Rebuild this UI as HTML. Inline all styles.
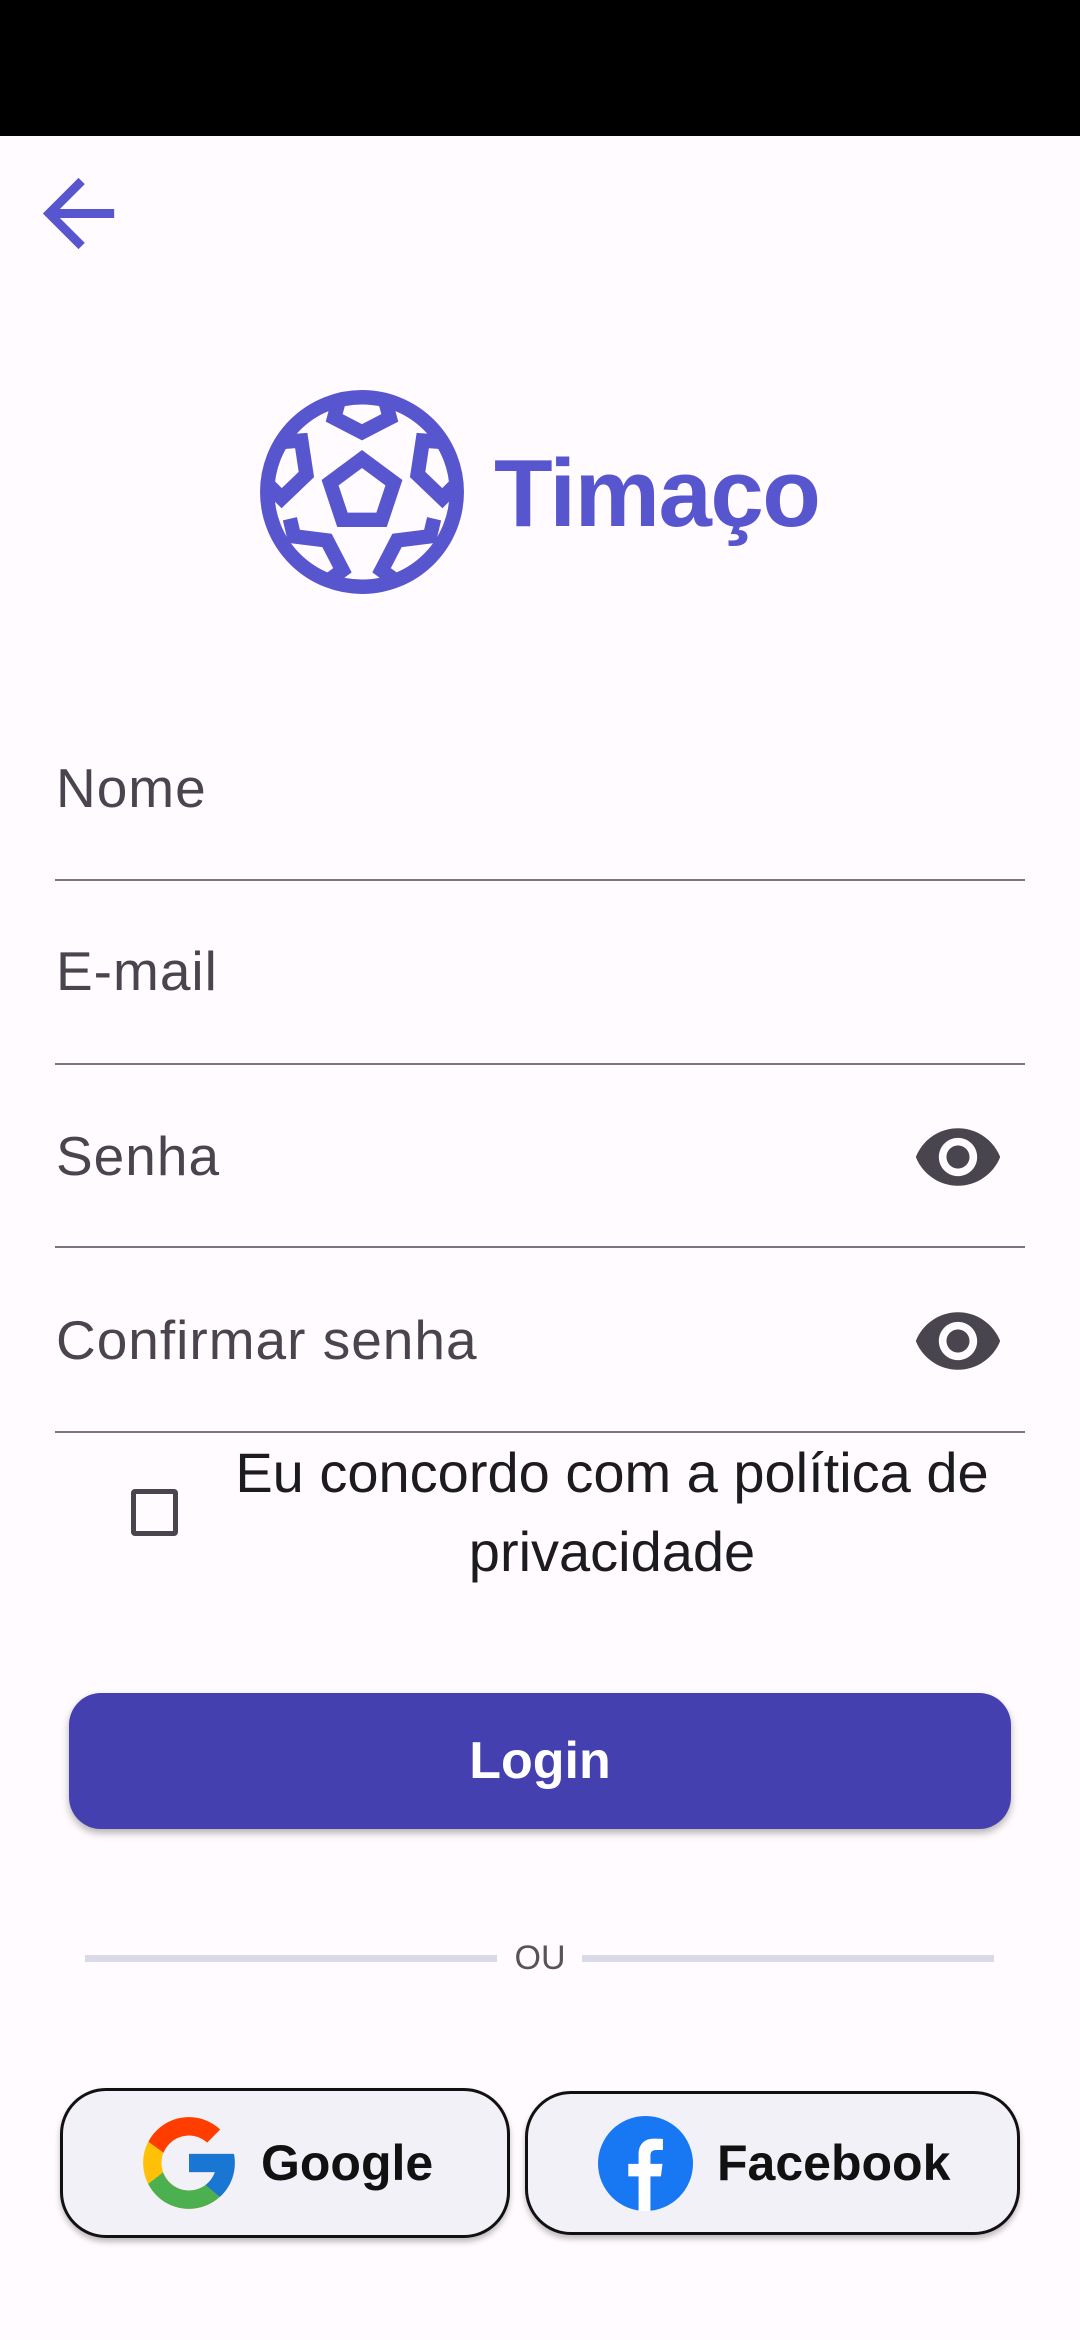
<!DOCTYPE html>
<html><head><meta charset="utf-8"><style>
*{margin:0;padding:0;box-sizing:border-box}
body{width:1080px;height:2340px;background:#FFFBFE;font-family:"Liberation Sans",Roboto,sans-serif;position:relative;overflow:hidden}
.abs{position:absolute}
.status{left:0;top:0;width:1080px;height:136px;background:#000}
.label{left:56px;font-size:55px;color:#49454F;letter-spacing:1px;line-height:60px}
.line{left:55px;width:970px;height:2px;background:#79747E}
.eye{left:912px;width:92px;height:92px}
.btn{border:3px solid #111;border-radius:46px;background:#F3F1F8;box-shadow:0 4px 6px rgba(0,0,0,.25)}
.btxt{font-size:50px;font-weight:bold;color:#111}
</style></head><body>
<div class="abs status"></div>
<svg class="abs" style="left:25px;top:160px" width="107" height="107" viewBox="0 0 24 24"><path fill="#5856CF" d="M20 11H7.83l5.59-5.59L12 4l-8 8 8 8 1.41-1.41L7.83 13H20v-2z"/></svg>

<svg class="abs" style="left:259px;top:389px" width="206" height="206" viewBox="0 0 200 200">
<defs><clipPath id="c"><circle cx="100" cy="100" r="98"/></clipPath></defs>
<g fill="none" stroke="#5856CF" stroke-width="14" stroke-linejoin="miter">
<circle cx="100" cy="100" r="92"/>
<polygon points="100,68 131,91 119,127 81,127 69,91"/>
<g clip-path="url(#c)">
<polyline points="80,2 73,28 100,42 127,28 120,2"/>
<polyline points="14,52 41,50 46,83 22,106 6,90"/>
<polyline points="186,52 159,50 154,83 178,106 194,90"/>
<polyline points="30,126 34,143 66,147 81,176 62,190"/>
<polyline points="170,126 166,143 134,147 119,176 138,190"/>
</g></g></svg>
<div class="abs" style="left:494px;top:434px;font-size:96px;font-weight:bold;color:#5856CF;letter-spacing:-1.5px;line-height:120px">Timaço</div>

<div class="abs label" style="top:758px">Nome</div>
<div class="abs line" style="top:879px"></div>
<div class="abs label" style="top:941px">E-mail</div>
<div class="abs line" style="top:1063px"></div>
<div class="abs label" style="top:1126px">Senha</div>
<svg class="abs eye" style="top:1111px" viewBox="0 0 24 24"><path fill="#49454F" d="M12 4.5C7 4.5 2.73 7.61 1 12c1.73 4.39 6 7.5 11 7.5s9.27-3.11 11-7.5c-1.730-4.39-6-7.5-11-7.5zM12 17c-2.76 0-5-2.24-5-5s2.240-5 5-5 5 2.24 5 5-2.24 5-5 5zm0-8c-1.66 0-3 1.34-3 3s1.34 3 3 3 3-1.34 3-3-1.34-3-3-3z"/></svg>
<div class="abs line" style="top:1246px"></div>
<div class="abs label" style="top:1310px">Confirmar senha</div>
<svg class="abs eye" style="top:1295px" viewBox="0 0 24 24"><path fill="#49454F" d="M12 4.5C7 4.5 2.73 7.61 1 12c1.73 4.39 6 7.5 11 7.5s9.27-3.11 11-7.5c-1.73-4.39-6-7.5-11-7.5zM12 17c-2.76 0-5-2.24-5-5s2.24-5 5-5 5 2.24 5 5-2.24 5-5 5zm0-8c-1.66 0-3 1.34-3 3s1.34 3 3 3 3-1.34 3-3-1.34-3-3-3z"/></svg>
<div class="abs line" style="top:1431px"></div>

<div class="abs" style="left:131px;top:1489px;width:47px;height:47px;border:5px solid #49454F;border-radius:4px"></div>
<div class="abs" style="left:182px;top:1433px;width:860px;text-align:center;font-size:56px;line-height:79px;color:#1C1B1F">Eu concordo com a política de<br>privacidade</div>

<div class="abs" style="left:69px;top:1693px;width:942px;height:136px;background:#4440B0;border-radius:32px;box-shadow:0 4px 8px rgba(0,0,0,.3);color:#fff;font-size:52px;font-weight:bold;text-align:center;line-height:136px">Login</div>

<div class="abs" style="left:85px;top:1955px;width:412px;height:7px;background:#DAD9E8"></div>
<div class="abs" style="left:582px;top:1955px;width:412px;height:7px;background:#DAD9E8"></div>
<div class="abs" style="left:500px;top:1938px;width:80px;text-align:center;font-size:34px;color:#555;line-height:40px">OU</div>

<div class="abs btn" style="left:60px;top:2088px;width:450px;height:150px"></div>
<svg class="abs" style="left:134px;top:2108px" width="110" height="110" viewBox="0 0 48 48">
<path fill="#FFC107" d="M43.6 20H24v8h11.3C33.7 32.7 29.2 36 24 36c-6.6 0-12-5.4-12-12s5.4-12 12-12c3.1 0 5.8 1.2 7.9 3.1l5.7-5.7C34 6.1 29.3 4 24 4 13 4 4 13 4 24s9 20 20 20 20-9 20-20c0-1.3-.1-2.7-.4-4z"/>
<path fill="#FF3D00" d="M6.3 14.7l6.6 4.8C14.7 15.1 19 12 24 12c3.1 0 5.8 1.2 7.9 3.1l5.7-5.7C34 6.1 29.3 4 24 4 16.3 4 9.7 8.3 6.3 14.7z"/>
<path fill="#4CAF50" d="M24 44c5.2 0 9.9-2 13.4-5.2l-6.2-5.2C29.2 35.1 26.7 36 24 36c-5.2 0-9.6-3.3-11.3-7.9l-6.5 5C9.5 39.6 16.2 44 24 44z"/>
<path fill="#1976D2" d="M43.6 20H24v8h11.3c-.8 2.2-2.2 4.2-4.1 5.6l6.2 5.2C37 39.2 44 34 44 24c0-1.3-.1-2.7-.4-4z"/>
</svg>
<div class="abs btxt" style="left:261px;top:2133px;line-height:60px">Google</div>

<div class="abs btn" style="left:525px;top:2091px;width:495px;height:144px"></div>
<svg class="abs" style="left:598px;top:2116px" width="95" height="95" viewBox="0 0 48 48">
<circle cx="24" cy="24" r="24" fill="#1877F2"/>
<path fill="#fff" d="M26.5 48V30.5h5.3l.8-6.3h-6.1v-4c0-1.8.5-3 3.1-3h3.2v-5.6c-.6-.1-2.5-.2-4.6-.2-4.6 0-7.7 2.8-7.7 7.9v4.9h-5.2v6.3h5.2V48z"/>
</svg>
<div class="abs btxt" style="left:717px;top:2133px;line-height:60px">Facebook</div>
</body></html>
